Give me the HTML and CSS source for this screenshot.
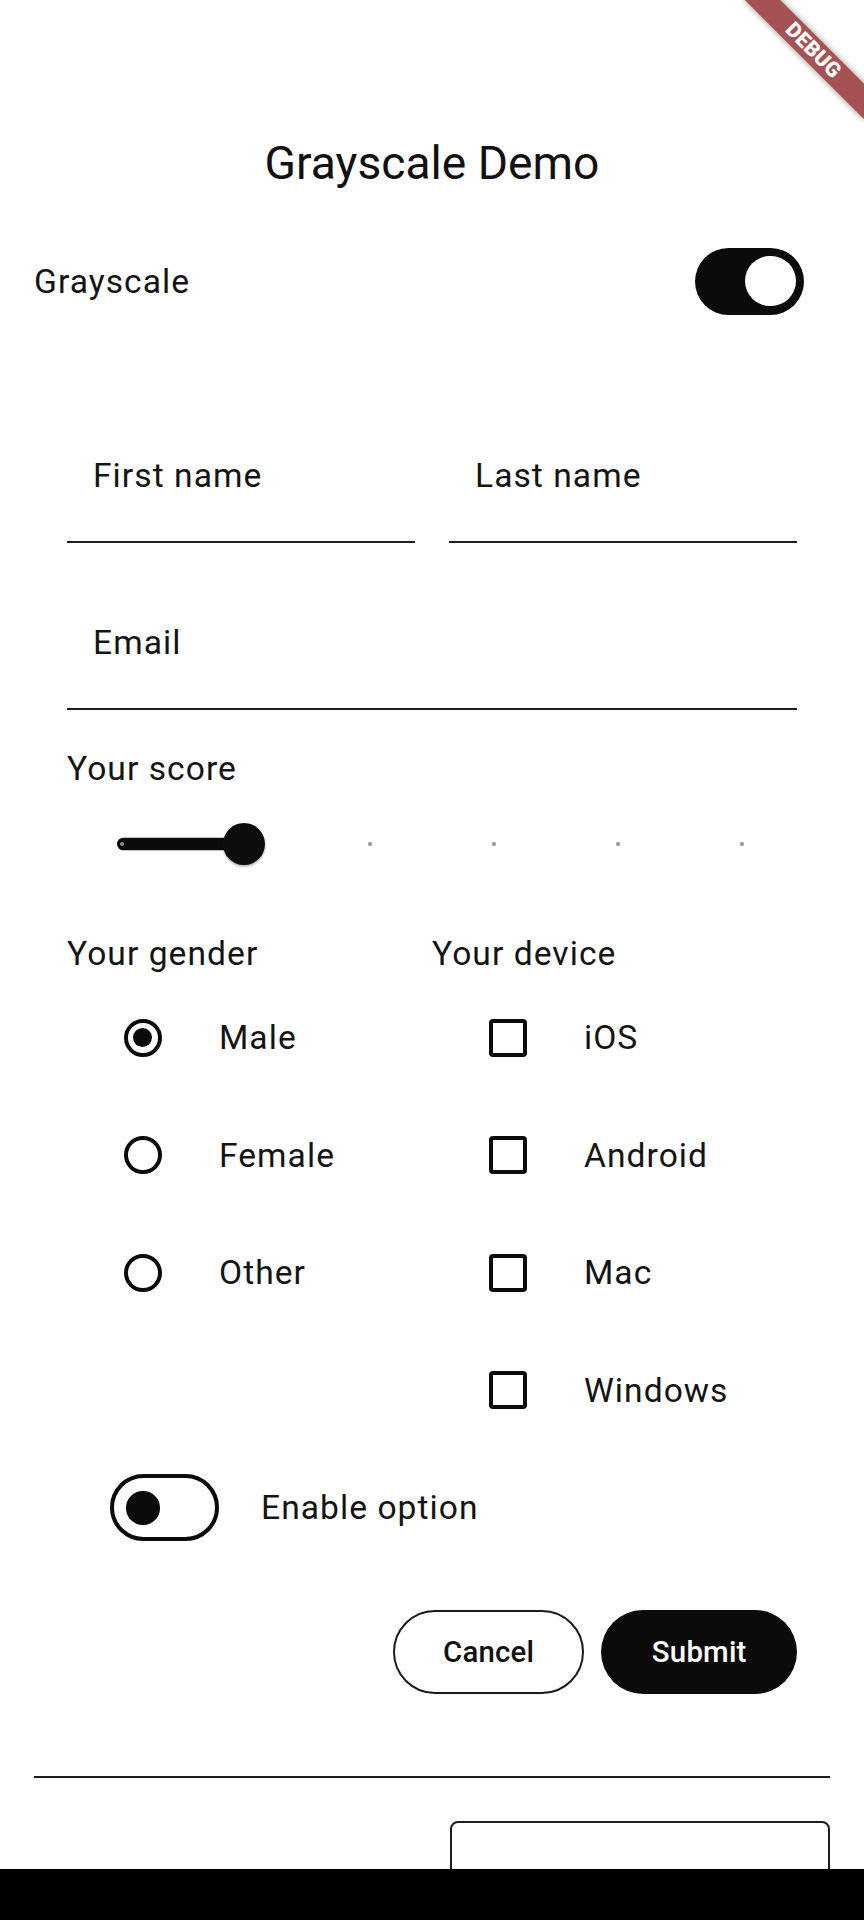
FILE: index.html
```html
<!DOCTYPE html>
<html lang="en">
<head>
<meta charset="utf-8">
<title>Grayscale Demo</title>
<link rel="stylesheet" href="styles.css">
</head>
<body>
<div class="page">
  <div class="banner"><span>DEBUG</span></div>

  <header class="appbar"><h1 class="title">Grayscale Demo</h1></header>

  <div class="tile-top">
    <span class="text">Grayscale</span>
    <div class="switch on"><div class="thumb"></div></div>
  </div>

  <main class="form">
    <div class="field-row">
      <div class="field"><span class="field-label">First name</span></div>
      <div class="field"><span class="field-label">Last name</span></div>
    </div>
    <div class="field email"><span class="field-label">Email</span></div>

    <div class="section-label score-label">Your score</div>
    <svg class="slider" width="730" height="84" viewBox="0 0 730 84">
      <defs>
        <filter id="sh" x="-50%" y="-50%" width="200%" height="200%">
          <feDropShadow dx="0" dy="1.5" stdDeviation="1.2" flood-color="#000" flood-opacity="0.35"/>
        </filter>
      </defs>
      <rect x="50" y="35.7" width="130" height="12.6" rx="6.3" fill="#0b0b0b"/>
      <circle cx="55" cy="42" r="2.1" fill="#8a8a8a"/>
      <circle cx="303" cy="42" r="2.1" fill="#9a9a9a"/>
      <circle cx="427" cy="42" r="2.1" fill="#9a9a9a"/>
      <circle cx="551" cy="42" r="2.1" fill="#9a9a9a"/>
      <circle cx="675" cy="42" r="2.1" fill="#9a9a9a"/>
      <circle cx="177" cy="42" r="21" fill="#0b0b0b" filter="url(#sh)"/>
    </svg>

    <div class="choices">
      <div class="column">
        <div class="section-label">Your gender</div>
        <div class="item"><div class="lead"><div class="radio checked"></div></div><span class="text">Male</span></div>
        <div class="item"><div class="lead"><div class="radio"></div></div><span class="text">Female</span></div>
        <div class="item"><div class="lead"><div class="radio"></div></div><span class="text">Other</span></div>
      </div>
      <div class="column">
        <div class="section-label">Your device</div>
        <div class="item"><div class="lead"><div class="checkbox"></div></div><span class="text">iOS</span></div>
        <div class="item"><div class="lead"><div class="checkbox"></div></div><span class="text">Android</span></div>
        <div class="item"><div class="lead"><div class="checkbox"></div></div><span class="text">Mac</span></div>
        <div class="item"><div class="lead"><div class="checkbox"></div></div><span class="text">Windows</span></div>
      </div>
    </div>

    <div class="item">
      <div class="lead lead-switch"><div class="switch off"><div class="thumb"></div></div></div>
      <span class="text">Enable option</span>
    </div>

    <div class="actions">
      <button class="btn btn-outline">Cancel</button>
      <button class="btn btn-filled">Submit</button>
    </div>
  </main>

  <hr class="divider">
  <div class="card"></div>
</div>
<div class="navbar"></div>
</body>
</html>
```

FILE: styles.css
```css
* { box-sizing: border-box; }

html, body {
  margin: 0;
  padding: 0;
  background: #ffffff;
}

body {
  font-family: Roboto, "Noto Sans", "Liberation Sans", sans-serif;
  color: #141414;
}

.page {
  position: relative;
  height: 1869px;
  overflow: hidden;
  background: #ffffff;
}

.navbar {
  height: 51px;
  background: #000000;
}

/* Debug ribbon */
.banner {
  position: absolute;
  left: 729px;
  top: 38px;
  width: 168px;
  height: 25.2px;
  transform: rotate(45deg);
  background: #a65252;
  box-shadow: 0 0 6px rgba(0, 0, 0, 0.45);
  display: flex;
  align-items: center;
  justify-content: center;
}
.banner span {
  color: #ffffff;
  font-weight: 900;
  font-size: 21px;
  line-height: 1;
  letter-spacing: 0.3px;
}

/* App bar */
.appbar {
  padding-top: 104px;
  height: 222px;
  display: flex;
  align-items: center;
  justify-content: center;
}
.title {
  margin: 0;
  font-weight: 400;
  font-size: 46.2px;
  color: #111111;
  letter-spacing: 0;
}

.text {
  font-size: 33.6px;
  letter-spacing: 1.05px;
  color: #141414;
}

/* Top switch tile */
.tile-top {
  height: 118px;
  display: flex;
  align-items: center;
  justify-content: space-between;
  padding: 0 60px 0 34px;
}

.switch {
  width: 109px;
  height: 67px;
  border-radius: 34px;
  display: flex;
  align-items: center;
}
.switch.on {
  background: #0b0b0b;
  justify-content: flex-end;
  padding-right: 8.4px;
}
.switch.on .thumb {
  width: 50.4px;
  height: 50.4px;
  border-radius: 50%;
  background: #ffffff;
}
.switch.off {
  border: 4.2px solid #0b0b0b;
  background: #ffffff;
  padding-left: 12.6px;
}
.switch.off .thumb {
  width: 33.6px;
  height: 33.6px;
  border-radius: 50%;
  background: #0b0b0b;
}

/* Form */
.form {
  padding: 69px 67px 0;
}

.field-row {
  display: grid;
  grid-template-columns: 1fr 1fr;
  column-gap: 34px;
}

.field {
  height: 134px;
  border-bottom: 2.1px solid #1e1e1e;
  display: flex;
  align-items: center;
  padding-left: 26px;
}
.field.email {
  margin-top: 33px;
}
.field-label {
  font-size: 33.6px;
  letter-spacing: 1.05px;
  color: #141414;
}

.section-label {
  height: 40px;
  display: flex;
  align-items: center;
  font-size: 33.6px;
  letter-spacing: 1.05px;
  color: #141414;
}
.score-label {
  margin-top: 38px;
}

.slider {
  display: block;
  margin-top: 14px;
}

.choices {
  margin-top: 47px;
  display: grid;
  grid-template-columns: 1fr 1fr;
}
.column .section-label {
  margin-bottom: 6px;
}

.item {
  height: 117.5px;
  display: flex;
  align-items: center;
  padding-left: 34px;
}
.lead {
  width: 84px;
  display: flex;
  align-items: center;
  justify-content: center;
  margin-right: 34px;
}
.lead-switch {
  width: 126px;
}

.radio {
  width: 37.8px;
  height: 37.8px;
  border-radius: 50%;
  border: 4.2px solid #0b0b0b;
  display: flex;
  align-items: center;
  justify-content: center;
}
.radio.checked::after {
  content: "";
  width: 19px;
  height: 19px;
  border-radius: 50%;
  background: #0b0b0b;
}

.checkbox {
  width: 37.8px;
  height: 37.8px;
  border: 4.2px solid #0b0b0b;
  border-radius: 4px;
}

/* Buttons */
.actions {
  margin-top: 43px;
  display: flex;
  justify-content: flex-end;
  gap: 17px;
}
.btn {
  height: 84px;
  border-radius: 42px;
  font-family: Roboto, "Noto Sans", "Liberation Sans", sans-serif;
  font-size: 29.4px;
  font-weight: 500;
  letter-spacing: 0.2px;
  cursor: pointer;
}
.btn-outline {
  background: #ffffff;
  color: #111111;
  border: 2.1px solid #1a1a1a;
  padding: 0 48.3px;
}
.btn-filled {
  background: #0b0b0b;
  color: #ffffff;
  border: none;
  padding: 0 50.4px;
}

.divider {
  margin: 82px 34px 0;
  border: none;
  height: 2.1px;
  background: #1e1e1e;
}

.card {
  margin: 43px 34px 0 450px;
  height: 120px;
  border: 2.1px solid #1e1e1e;
  border-radius: 8px 8px 0 0;
}
```
